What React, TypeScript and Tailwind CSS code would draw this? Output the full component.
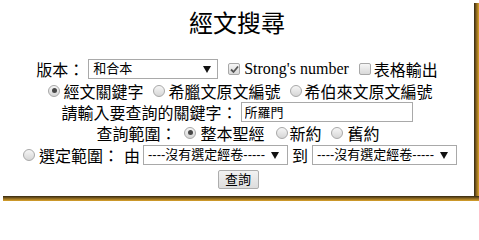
import React from "react";

const cjk = "font-['Noto_Sans_CJK_TC','Noto_Sans_CJK_SC',sans-serif]";

const Radio = ({ checked = false }: { checked?: boolean }) => (
  <span className="w-[12px] h-[12px] shrink-0 rounded-full border border-[#a8a8a8] bg-gradient-to-b from-[#f6f6f6] to-[#d6d6d6] flex items-center justify-center">
    {checked && <span className="w-[5px] h-[5px] rounded-full bg-[#474747]" />}
  </span>
);

const Checkbox = ({ checked = false }: { checked?: boolean }) => (
  <span className="w-[12px] h-[12px] shrink-0 rounded-[2px] border border-[#a8a8a8] bg-gradient-to-b from-[#f6f6f6] to-[#d9d9d9] flex items-center justify-center">
    {checked && (
      <svg width="9" height="9" viewBox="0 0 9 9">
        <path d="M1 4.5 L3.5 7 L8 1.5" fill="none" stroke="#555" strokeWidth="1.8" />
      </svg>
    )}
  </span>
);

const Select = ({ value, width, arrowRight }: { value: string; width: string; arrowRight: string }) => (
  <span className={`relative flex items-center h-[20px] border border-[#a9a9a9] bg-white ${width}`}>
    <span className="pl-[4px] text-[13px] leading-[16px] text-black font-['Liberation_Sans','Noto_Sans_CJK_TC',sans-serif] whitespace-nowrap">
      {value}
    </span>
    <span className="absolute top-[6px] flex" style={{ right: arrowRight }}>
      <svg width="8" height="7" viewBox="0 0 8 7">
        <path d="M0 0 H8 L4 7 Z" fill="#111" />
      </svg>
    </span>
  </span>
);

export default function App() {
  return (
    <div className={`w-[479px] h-[201px] bg-white flex flex-col text-black ${cjk}`}>
      <div className="flex h-[196px]">
        <main className="w-[474px] h-full bg-white flex flex-col">
          <h1 className="h-[44px] flex items-center justify-center text-[24px] font-normal leading-[30px]">
            經文搜尋
          </h1>

          <div className="mt-[14px] h-[22px] flex items-center justify-center text-[16px] leading-[20px]">
            <span>版本：</span>
            <span className="ml-[4px]">
              <Select value="和合本" width="w-[130px]" arrowRight="6px" />
            </span>
            <span className="ml-[10px]">
              <Checkbox checked />
            </span>
            <span className="ml-[4px] font-['Liberation_Serif',serif]">Strong's number</span>
            <span className="ml-[10px]">
              <Checkbox />
            </span>
            <span className="ml-[3px]">表格輸出</span>
          </div>

          <div className="h-[21px] pl-[7px] flex items-center justify-center text-[16px] leading-[20px]">
            <Radio checked />
            <span className="ml-[3px]">經文關鍵字</span>
            <span className="ml-[10px]">
              <Radio />
            </span>
            <span className="ml-[3px]">希臘文原文編號</span>
            <span className="ml-[9px]">
              <Radio />
            </span>
            <span className="ml-[3px]">希伯來文原文編號</span>
          </div>

          <div className="h-[21px] flex items-center justify-center text-[16px] leading-[20px]">
            <span>請輸入要查詢的關鍵字：</span>
            <input
              defaultValue="所羅門"
              className="ml-[3px] w-[172px] h-[20px] border border-[#a9a9a9] px-[3px] text-[13px] leading-[16px] font-['Liberation_Sans','Noto_Sans_CJK_TC',sans-serif] outline-none"
            />
          </div>

          <div className="h-[21px] pl-[2px] flex items-center justify-center text-[16px] leading-[20px]">
            <span>查詢範圍：</span>
            <span className="ml-[8px]">
              <Radio checked />
            </span>
            <span className="ml-[4px]">整本聖經</span>
            <span className="ml-[11px]">
              <Radio />
            </span>
            <span className="ml-[2px]">新約</span>
            <span className="ml-[9px]">
              <Radio />
            </span>
            <span className="ml-[5px]">舊約</span>
          </div>

          <div className="mt-[1px] h-[22px] pl-[6px] flex items-center justify-center text-[16px] leading-[20px]">
            <Radio />
            <span className="ml-[4px]">選定範圍：</span>
            <span className="ml-[5px]">由</span>
            <span className="ml-[3px]">
              <Select value="----沒有選定經卷-----" width="w-[145px]" arrowRight="8px" />
            </span>
            <span className="ml-[4px]">到</span>
            <span className="ml-[4px]">
              <Select value="----沒有選定經卷-----" width="w-[145px]" arrowRight="8px" />
            </span>
          </div>

          <div className="mt-[2px] h-[22px] pl-[2px] flex items-center justify-center">
            <button className="w-[41px] h-[19px] border border-[#adadad] rounded-[2px] bg-gradient-to-b from-[#f2f2f2] to-[#dddddd] text-[13px] leading-[16px] flex items-center justify-center">
              查詢
            </button>
          </div>
        </main>
        <div className="w-[5px] mt-[3px] bg-gradient-to-r from-[#33270f] via-[#8c6820] to-[#dca42c]" />
      </div>
      <div className="h-[5px] ml-[3px] bg-gradient-to-b from-[#33270f] via-[#8c6820] to-[#dca42c]" />
    </div>
  );
}
